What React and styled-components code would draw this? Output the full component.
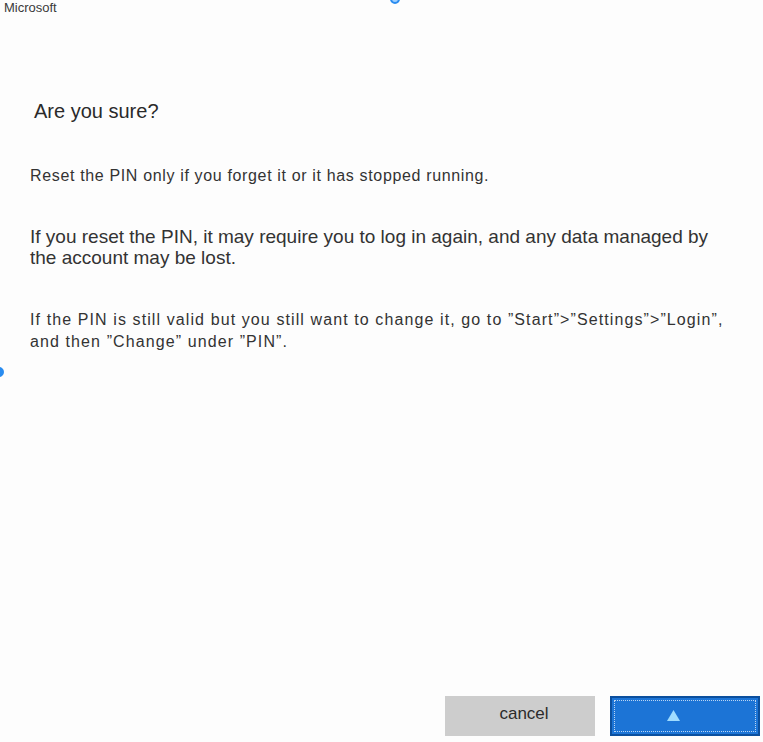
import React from 'react'
import styled, { createGlobalStyle } from 'styled-components'

const Global = createGlobalStyle`
  html, body {
    margin: 0;
    padding: 0;
    background: #fdfdfd;
  }
  body {
    font-family: "Liberation Sans", Arial, sans-serif;
    color: #2f2f2f;
    overflow: hidden;
  }
`

const Page = styled.div`
  position: relative;
  height: 742px;
  display: flex;
  flex-direction: column;
  overflow: hidden;
`

const Brand = styled.div`
  font-size: 13px;
  color: #3a3a3a;
  padding: 0 0 0 4px;
  line-height: 15px;
`

const Content = styled.div`
  padding: 0 33px 0 30px;
  display: flex;
  flex-direction: column;
`

const Title = styled.h1`
  margin: 84px 0 0 4px;
  font-size: 20px;
  font-weight: normal;
  line-height: 24px;
  color: #2a2a2a;
`

const Para = styled.p`
  margin: ${props => props.top}px 0 0 0;
  font-size: ${props => props.size}px;
  line-height: ${props => props.lh}px;
  letter-spacing: ${props => props.ls || 0}px;
  color: #333;
`

const Footer = styled.div`
  margin-top: auto;
  display: flex;
  justify-content: flex-end;
  gap: 15px;
  padding: 0 3px 6px 0;
`

const Button = styled.button`
  width: 150px;
  height: 40px;
  border: none;
  font-family: "Liberation Sans", Arial, sans-serif;
  font-size: 17px;
  color: #2b2b2b;
  background: #cdcdcd;
  padding: 0 0 5px 8px;
`

const PrimaryButton = styled(Button)`
  position: relative;
  background: #1c74d6;
  border: 2px solid #0b4f9e;
  display: flex;
  align-items: center;
  justify-content: center;
  padding: 0 24px 2px 0;

  &::after {
    content: '';
    position: absolute;
    inset: 2px;
    border: 1px dotted rgba(255, 255, 255, 0.7);
  }
`

const Dot = styled.span`
  position: absolute;
  width: 10px;
  height: 10px;
  border-radius: 50%;
  border: 2px solid #2a8cf0;
  background: #9fd0ff;
  box-sizing: border-box;
`

const Arrow = () => (
  <svg width="13" height="11" viewBox="0 0 13 11">
    <polygon points="6.5,0 13,11 0,11" fill="#9fdcff" />
  </svg>
)

export default function App() {
  return (
    <Page>
      <Global />
      <Dot style={{ left: 390, top: -6 }} />
      <Dot style={{ left: -6, top: 367, background: '#2a8cf0' }} />
      <Brand>Microsoft</Brand>
      <Content>
        <Title>Are you sure?</Title>
        <Para top={43} size={16} lh={20} ls={0.65}>
          Reset the PIN only if you forget it or it has stopped running.
        </Para>
        <Para top={40} size={19} lh={21} ls={0}>
          If you reset the PIN, it may require you to log in again, and any data managed by
          the account may be lost.
        </Para>
        <Para top={41} size={16} lh={22} ls={1.1}>
          If the PIN is still valid but you still want to change it, go to ”Start”&gt;”Settings”&gt;”Login”,
          and then ”Change” under ”PIN”.
        </Para>
      </Content>
      <Footer>
        <Button>cancel</Button>
        <PrimaryButton>
          <Arrow />
        </PrimaryButton>
      </Footer>
    </Page>
  )
}
